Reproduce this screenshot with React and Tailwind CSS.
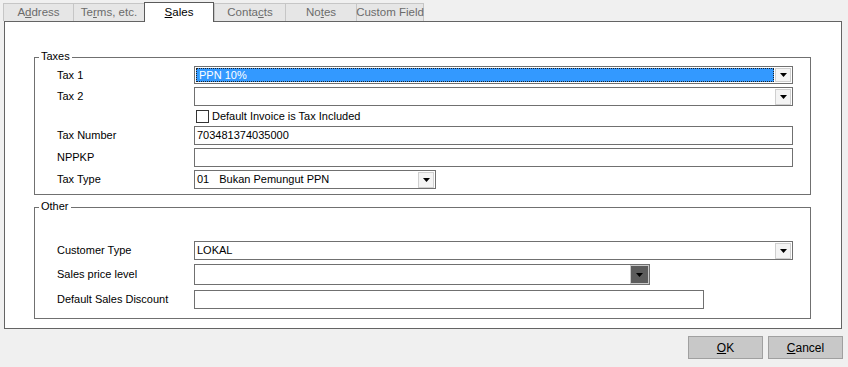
import React from "react";

function Tri() {
  return (
    <svg width="7" height="4" viewBox="0 0 7 4">
      <polygon points="0,0 7,0 3.5,4" fill="#000" />
    </svg>
  );
}

function DropBtn() {
  return (
    <div className="flex w-[16px] h-[16px] shrink-0 items-center justify-center bg-[#f4f4f4] border border-[#cfcfcf]">
      <Tri />
    </div>
  );
}

function Label({ children }) {
  return <div className="w-[137px] shrink-0 whitespace-nowrap text-[11px] text-black leading-none">{children}</div>;
}

function Tab({ children, selected, w, last }) {
  if (selected) {
    return (
      <div
        className={`relative z-10 -mb-px flex h-[20px] items-center justify-center whitespace-nowrap border-t border-l border-r border-[#5a5a5a] bg-white text-[11.5px] text-black ${w}`}
      >
        {children}
      </div>
    );
  }
  return (
    <div
      className={`flex h-[18px] items-center justify-center whitespace-nowrap border-t border-l border-[#c6c6c6] bg-[#e6e6e6] text-[11.5px] text-[#6b6b6b] ${last ? "border-r" : ""} ${w}`}
    >
      {children}
    </div>
  );
}

function Group({ title, className, children }) {
  return (
    <div className={`relative ml-[29px] w-[777px] border border-[#707070] ${className}`}>
      <div className="absolute left-[4px] top-[-7px] bg-white px-[2px] text-[11px] leading-none text-black">
        {title}
      </div>
      {children}
    </div>
  );
}

export default function App() {
  return (
    <div className="w-[848px] h-[367px] overflow-hidden bg-[#f0f0f0] pt-[2px] font-['Liberation_Sans',Arial,sans-serif]">
      {/* Tabs */}
      <div className="ml-[3px] flex h-[19px] items-end">
        <Tab w="w-[70px]">
          A<span className="underline">d</span>dress
        </Tab>
        <Tab w="w-[71px]">
          Te<span className="underline">r</span>ms, etc.
        </Tab>
        <Tab w="w-[70px]" selected>
          <span className="underline">S</span>ales
        </Tab>
        <Tab w="w-[71px]">
          Conta<span className="underline">c</span>ts
        </Tab>
        <Tab w="w-[71px]">
          No<span className="underline">t</span>es
        </Tab>
        <Tab w="w-[68px]" last>
          Custom Field
        </Tab>
      </div>

      {/* Panel */}
      <div className="ml-[4px] w-[838px] h-[308px] border border-[#646464] bg-white pt-[35px]">
        <Group title="Taxes" className="h-[138px] pt-[8px]">
          {/* Tax 1 */}
          <div className="flex items-center pl-[22px]">
            <Label>Tax 1</Label>
            <div className="flex h-[18px] w-[599px] items-center gap-[1px] border border-[#707070] bg-white p-px">
              <div className="flex h-full flex-1 items-center border border-dotted border-[#222] bg-[#3399ff] pl-[2px] text-[11px] leading-none text-white">
                PPN 10%
              </div>
              <div className="flex h-full w-[16px] shrink-0 items-center justify-center bg-[#f4f4f4] border border-[#cfcfcf]">
                <Tri />
              </div>
            </div>
          </div>
          {/* Tax 2 */}
          <div className="mt-[3px] flex items-center pl-[22px]">
            <Label>Tax 2</Label>
            <div className="flex h-[19px] w-[599px] items-center justify-end border border-[#707070] bg-white pr-px">
              <DropBtn />
            </div>
          </div>
          {/* Checkbox */}
          <div className="mt-[4px] flex h-[13px] items-center pl-[22px]">
            <div className="w-[139px] shrink-0" />
            <div className="h-[13px] w-[13px] border border-[#333] bg-white" />
            <div className="ml-[3px] text-[11px] leading-none text-black">Default Invoice is Tax Included</div>
          </div>
          {/* Tax Number */}
          <div className="mt-[3px] flex items-center pl-[22px]">
            <Label>Tax Number</Label>
            <div className="flex h-[19px] w-[599px] items-center border border-[#707070] bg-white pl-[2px] text-[11px] leading-none text-black">
              703481374035000
            </div>
          </div>
          {/* NPPKP */}
          <div className="mt-[3px] flex items-center pl-[22px]">
            <Label>NPPKP</Label>
            <div className="h-[19px] w-[599px] border border-[#707070] bg-white" />
          </div>
          {/* Tax Type */}
          <div className="mt-[3px] flex items-center pl-[22px]">
            <Label>Tax Type</Label>
            <div className="flex h-[19px] w-[242px] items-center border border-[#707070] bg-white pl-[2px] pr-px text-[11px] leading-none text-black">
              <span>01</span>
              <span className="ml-[10px] flex-1">Bukan Pemungut PPN</span>
              <DropBtn />
            </div>
          </div>
        </Group>

        <Group title="Other" className="mt-[12px] h-[112px] pt-[33px]">
          {/* Customer Type */}
          <div className="flex items-center pl-[22px]">
            <Label>Customer Type</Label>
            <div className="flex h-[19px] w-[599px] items-center border border-[#707070] bg-white pl-[2px] pr-px text-[11px] leading-none text-black">
              <span className="flex-1">LOKAL</span>
              <DropBtn />
            </div>
          </div>
          {/* Sales price level */}
          <div className="mt-[4px] flex items-center pl-[22px]">
            <Label>Sales price level</Label>
            <div className="flex h-[21px] w-[456px] items-stretch justify-end border border-[#707070] bg-white">
              <div className="flex w-[19px] items-center justify-center border border-[#c9c9c9] bg-[#5c5c5c]">
                <Tri />
              </div>
            </div>
          </div>
          {/* Default Sales Discount */}
          <div className="mt-[5px] flex items-center pl-[22px]">
            <Label>Default Sales Discount</Label>
            <div className="h-[19px] w-[510px] border border-[#707070] bg-white" />
          </div>
        </Group>
      </div>

      {/* Buttons */}
      <div className="mt-[7px] flex justify-end gap-[5px] pr-[5px]">
        <div className="flex h-[23px] w-[75px] items-center justify-center border border-[#a0a0a0] bg-[#c8c8c8] text-[12px] text-black">
          <span className="underline">O</span>K
        </div>
        <div className="flex h-[23px] w-[75px] items-center justify-center border border-[#a0a0a0] bg-[#c8c8c8] text-[12px] text-black">
          <span className="underline">C</span>ancel
        </div>
      </div>
    </div>
  );
}
